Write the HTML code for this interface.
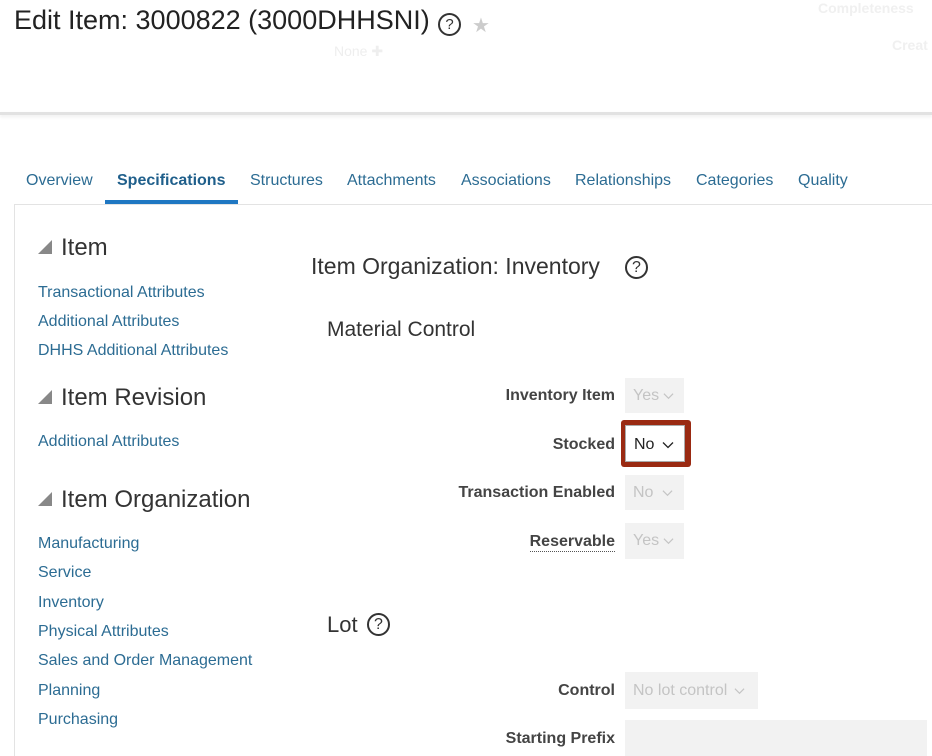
<!DOCTYPE html>
<html style="overflow:hidden;height:756px"><head><meta charset="utf-8"><style>
body{margin:0;width:932px;height:756px;overflow:hidden;background:#fff;font-family:"Liberation Sans",Arial,sans-serif;position:relative}
.a{position:absolute;white-space:nowrap}
.tab{position:absolute;top:172px;font-size:16px;color:#2c6c93}
.lk{position:absolute;left:38px;font-size:16px;color:#2c6c93}
.h{position:absolute;font-size:24px;color:#333;white-space:nowrap}
.tri{position:absolute;left:38px;width:0;height:0;border-left:14px solid transparent;border-bottom:14px solid #888}
.lb{position:absolute;right:317px;font-size:16px;font-weight:bold;color:#444;text-align:right}
.sel{position:absolute;left:625px;background:#f2f2f2;color:#c4c4c4;font-size:16px;box-sizing:border-box;padding-left:8px;white-space:nowrap}
.sel svg{vertical-align:middle;margin-left:4px}
.help{position:absolute;border:2px solid #333;border-radius:50%;box-sizing:border-box;text-align:center;font-size:16px;color:#333}
</style></head><body>
<div class="a" style="left:14px;top:5px;font-size:27px;color:#222">Edit Item: 3000822 (3000DHHSNI)</div>
<div class="help" style="left:438px;top:13px;width:23px;height:23px;line-height:19px;font-size:15px">?</div>
<div class="a" style="left:472px;top:13px;font-size:20px;color:#ccc">★</div>
<div class="a" style="left:334px;top:43px;font-size:14px;color:#eee">None ✚</div>
<div class="a" style="left:818px;top:0px;font-size:14px;font-weight:bold;color:#f0f0f0">Completeness</div>
<div class="a" style="left:892px;top:37px;font-size:14px;font-weight:bold;color:#f0f0f0">Creat</div>
<div class="a" style="left:0;top:112px;width:932px;height:3px;background:#e2e2e2;box-shadow:0 2px 3px #eee"></div>

<div class="tab" style="left:26px">Overview</div>
<div class="tab" style="left:117px;font-weight:bold;color:#1f5f8b">Specifications</div>
<div class="tab" style="left:250px">Structures</div>
<div class="tab" style="left:347px">Attachments</div>
<div class="tab" style="left:461px">Associations</div>
<div class="tab" style="left:575px">Relationships</div>
<div class="tab" style="left:696px">Categories</div>
<div class="tab" style="left:798px">Quality</div>
<div class="a" style="left:105px;top:200px;width:133px;height:4px;background:#1f77c2"></div>
<div class="a" style="left:14px;top:204px;width:918px;height:552px;border:1px solid #e3e3e3;border-right:none;border-bottom:none;box-sizing:border-box"></div>

<div class="tri" style="top:240px"></div><div class="h" style="left:61px;top:234px">Item</div>
<div class="lk" style="top:284px">Transactional Attributes</div>
<div class="lk" style="top:313px">Additional Attributes</div>
<div class="lk" style="top:342px">DHHS Additional Attributes</div>
<div class="tri" style="top:390px"></div><div class="h" style="left:61px;top:384px">Item Revision</div>
<div class="lk" style="top:433px">Additional Attributes</div>
<div class="tri" style="top:492px"></div><div class="h" style="left:61px;top:486px">Item Organization</div>
<div class="lk" style="top:535px">Manufacturing</div>
<div class="lk" style="top:564px">Service</div>
<div class="lk" style="top:594px">Inventory</div>
<div class="lk" style="top:623px">Physical Attributes</div>
<div class="lk" style="top:652px">Sales and Order Management</div>
<div class="lk" style="top:682px">Planning</div>
<div class="lk" style="top:711px">Purchasing</div>

<div class="h" style="left:311px;top:253px;font-size:23px">Item Organization: Inventory</div>
<div class="help" style="left:625px;top:256px;width:23px;height:23px;line-height:19px">?</div>
<div class="h" style="left:327px;top:318px;font-size:21px">Material Control</div>

<svg width="0" height="0" style="position:absolute"><defs><symbol id="cv" viewBox="0 0 12 8"><path d="M1 1.5 L6 6.5 L11 1.5" fill="none" stroke="currentColor" stroke-width="1.3"/></symbol></defs></svg>

<div class="lb" style="top:387px">Inventory Item</div>
<div class="sel" style="top:378px;width:59px;height:35px;line-height:35px">Yes<svg width="11" height="8"><use href="#cv"/></svg></div>
<div class="lb" style="top:436px">Stocked</div>
<div class="a" style="left:621px;top:420px;width:70px;height:47px;background:#9a2a12;border-radius:3px"></div>
<div class="sel" style="top:425px;left:625px;width:60px;height:37px;line-height:37px;background:#fff;color:#222;border:1px solid #aaa">No<svg width="12" height="8" style="margin-left:8px"><use href="#cv"/></svg></div>
<div class="lb" style="top:484px">Transaction Enabled</div>
<div class="sel" style="top:475px;width:59px;height:35px;line-height:35px">No<svg width="11" height="8" style="margin-left:9px"><use href="#cv"/></svg></div>
<div class="lb" style="top:532px;border-bottom:1px dotted #555;line-height:19px">Reservable</div>
<div class="sel" style="top:523px;width:59px;height:36px;line-height:36px">Yes<svg width="11" height="8"><use href="#cv"/></svg></div>

<div class="h" style="left:327px;top:612px;font-size:22px">Lot</div>
<div class="help" style="left:367px;top:613px;width:23px;height:23px;line-height:19px">?</div>
<div class="lb" style="top:682px">Control</div>
<div class="sel" style="top:672px;width:133px;height:37px;line-height:37px">No lot control<svg width="11" height="8" style="margin-left:7px"><use href="#cv"/></svg></div>
<div class="lb" style="top:730px">Starting Prefix</div>
<div class="sel" style="top:720px;width:302px;height:36px"></div>
</body></html>
